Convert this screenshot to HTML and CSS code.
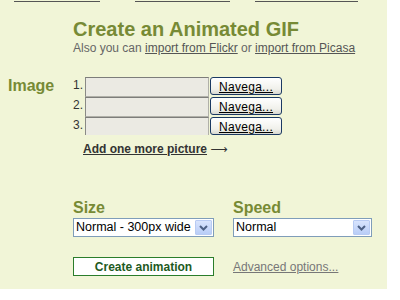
FILE: index.html
```html
<!DOCTYPE html>
<html lang="en">
<head>
    <meta charset="UTF-8">
    <title>Create an Animated GIF</title>
    <link rel="stylesheet" href="styles.css">
</head>
<body>
    <div class="page">
        <!-- top nav, mostly scrolled out of view -->
        <div class="toplinks">
            <a href="#" class="tl1">Home of animations</a>
            <a href="#" class="tl2">Create animations now</a>
            <a href="#" class="tl3">Browse animated files</a>
        </div>

        <div class="header">
            <h1>Create an Animated GIF</h1>
            <p class="sub">Also you can <a href="#">import from Flickr</a> or <a href="#">import from Picasa</a></p>
        </div>

        <form class="gif-form">
            <div class="image-block">
                <label class="big-label image-label">Image</label>
                <div class="files">
                    <div class="file-row">
                        <span class="num">1.</span>
                        <input type="text" class="file-path">
                        <button type="button" class="browse"><u>Navega...</u></button>
                    </div>
                    <div class="file-row">
                        <span class="num">2.</span>
                        <input type="text" class="file-path">
                        <button type="button" class="browse"><u>Navega...</u></button>
                    </div>
                    <div class="file-row last">
                        <span class="num">3.</span>
                        <input type="text" class="file-path">
                        <button type="button" class="browse"><u>Navega...</u></button>
                    </div>
                    <a href="#" class="add-more">Add one more picture</a> <span class="arrow">&#x27F6;</span>
                </div>
            </div>

            <div class="options">
                <div class="opt size-opt">
                    <label class="big-label">Size</label>
                    <div class="select">
                        <span class="select-text">Normal - 300px wide</span>
                        <span class="select-btn">
                            <svg width="9" height="6" viewBox="0 0 9 6"><path d="M1 1 L4.5 4.5 L8 1" fill="none" stroke="#4d6185" stroke-width="2"/></svg>
                        </span>
                    </div>
                </div>
                <div class="opt speed-opt">
                    <label class="big-label">Speed</label>
                    <div class="select">
                        <span class="select-text">Normal</span>
                        <span class="select-btn">
                            <svg width="9" height="6" viewBox="0 0 9 6"><path d="M1 1 L4.5 4.5 L8 1" fill="none" stroke="#4d6185" stroke-width="2"/></svg>
                        </span>
                    </div>
                </div>
            </div>

            <div class="actions">
                <button type="button" class="create">Create animation</button>
                <a href="#" class="advanced">Advanced options...</a>
            </div>
        </form>
    </div>
</body>
</html>
```

FILE: styles.css
```css
body {
    margin: 0;
    padding: 0;
    background-color: #fff;
    font-family: "Liberation Sans", Arial, sans-serif;
    font-size: 12px;
    color: #333;
    overflow: hidden;
}

.page {
    width: 387px;
    height: 300px;
    background-color: #f1f5d7;
}

a {
    color: #555;
}

.toplinks {
    display: flex;
    align-items: flex-start;
    height: 3px;
    line-height: 14px;
    margin-top: -11px;
    padding-bottom: 11px;
}

.toplinks a {
    display: block;
    flex: none;
    height: 14px;
    color: #555;
    white-space: nowrap;
    overflow: hidden;
}

.tl1 {
    margin-left: 14px;
    width: 86px;
}

.tl2 {
    margin-left: 35px;
    width: 95px;
}

.tl3 {
    margin-left: 25px;
    width: 103px;
}

.header {
    padding-left: 73px;
    margin-top: 14px;
}

h1 {
    margin: 0;
    font-size: 20px;
    line-height: 24px;
    color: #778a35;
}

.sub {
    margin: 0;
    line-height: 14px;
    color: #666;
}

.sub a {
    color: #555;
}

.gif-form {
    margin-top: 22px;
}

.image-block {
    display: flex;
}

.big-label {
    display: block;
    font-size: 16px;
    font-weight: bold;
    line-height: 19px;
    color: #778a35;
}

.image-label {
    width: 65px;
    padding-left: 8px;
    margin-top: -1px;
}

.file-row {
    display: flex;
    height: 20px;
}

.file-row.last {
    height: 18px;
    overflow: hidden;
}

.num {
    width: 12px;
    line-height: 16px;
    color: #333;
}

.file-path {
    box-sizing: border-box;
    width: 124px;
    height: 20px;
    margin: 0;
    border: 1px solid #b0b0a8;
    border-top-color: #7d7d7a;
    border-left-color: #8a8a86;
    background-color: #ebeae3;
}

.browse {
    box-sizing: border-box;
    width: 72px;
    height: 18px;
    margin: 0 0 0 1px;
    padding: 2px 0 0;
    border: 1px solid #1c3a63;
    border-radius: 3px;
    background: linear-gradient(#ffffff, #f0f0ea 70%, #d8d8d0);
    font-family: "Liberation Sans", Arial, sans-serif;
    font-size: 12px;
    line-height: 13px;
    color: #000;
    letter-spacing: 0.3px;
}

.add-more {
    display: inline-block;
    margin: 7px 0 0 10px;
    font-weight: bold;
    color: #333;
    line-height: 14px;
}

.arrow {
    font-family: "DejaVu Sans", sans-serif;
    font-size: 12px;
    color: #333;
}

.options {
    display: flex;
    padding-left: 73px;
    margin-top: 42px;
}

.opt {
    flex: none;
    width: 160px;
}

.select {
    display: flex;
    box-sizing: border-box;
    height: 19px;
    margin-top: 1px;
    border: 1px solid #7f9db9;
    background-color: #fff;
}

.size-opt .select {
    width: 141px;
}

.speed-opt .select {
    width: 139px;
}

.select-text {
    flex: 1;
    padding-left: 2px;
    line-height: 17px;
    font-size: 12.5px;
    color: #000;
    white-space: nowrap;
    overflow: hidden;
}

.select-btn {
    display: flex;
    align-items: center;
    justify-content: center;
    width: 15px;
    margin: 1px;
    border: 1px solid #b8cbf3;
    border-radius: 1px;
    background: linear-gradient(#d8e4fd, #b9cdf7);
}

.actions {
    display: flex;
    align-items: center;
    padding-left: 73px;
    margin-top: 20px;
}

.create {
    flex: none;
    box-sizing: border-box;
    width: 141px;
    height: 19px;
    margin: 0 19px 0 0;
    padding: 0;
    border: 1px solid #2b7d2b;
    background-color: #fff;
    font-family: "Liberation Sans", Arial, sans-serif;
    font-size: 12px;
    font-weight: bold;
    color: #1e5a1e;
}

.advanced {
    color: #777;
}
```
